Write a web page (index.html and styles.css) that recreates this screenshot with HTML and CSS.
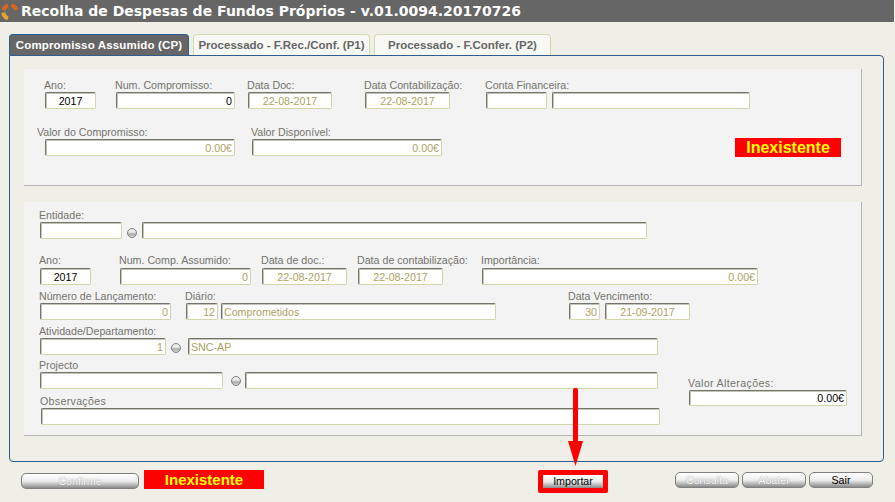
FILE: index.html
```html
<!DOCTYPE html>
<html>
<head>
    <title>Recolha de Despesas de Fundos Próprios</title>
    <link rel="stylesheet" href="styles.css">
</head>
<body>
    <div class="title-bar">
        <svg class="logo" width="17" height="18" viewBox="0 0 17 18" fill="none" stroke-width="4">
            <path d="M2.6 8 A6.5 6.5 0 0 1 7 3.4" stroke="#d9661f"/>
            <path d="M10.6 3.2 A6.5 6.5 0 0 1 15 8" stroke="#d9661f"/>
            <path d="M2.4 10.5 A6.5 6.5 0 0 0 7 16.3" stroke="#e8a22e"/>
        </svg>
        <h1>Recolha de Despesas de Fundos Próprios - v.01.0094.20170726</h1>
    </div>

    <div class="tabs">
        <div class="tab tab-active">Compromisso Assumido (CP)</div>
        <div class="tab">Processado - F.Rec./Conf. (P1)</div>
        <div class="tab">Processado - F.Confer. (P2)</div>
    </div>

    <div class="frame">
        <div class="panel panel-top">
            <div class="row row-a">
                <div class="field w-ano1"><label>Ano:</label><input class="active center" value="2017"></div>
                <div class="field w-num1"><label>Num. Compromisso:</label><input class="active right" value="0"></div>
                <div class="field w-data1"><label>Data Doc:</label><input class="center" value="22-08-2017"></div>
                <div class="field w-cont1"><label>Data Contabilização:</label><input class="center" value="22-08-2017"></div>
                <div class="field w-conta"><label>Conta Financeira:</label><input></div>
                <div class="field w-conta2"><label>&nbsp;</label><input></div>
            </div>
            <div class="row row-b">
                <div class="field w-valor"><label>Valor do Compromisso:</label><input class="right" value="0.00€"></div>
                <div class="field w-disp"><label>Valor Disponível:</label><input class="right" value="0.00€"></div>
                <div class="status status-top">Inexistente</div>
            </div>
        </div>

        <div class="panel panel-bottom">
            <div class="row row-ent">
                <div class="field w-ent"><label>Entidade:</label><input></div>
                <span class="radio radio-ent"></span>
                <div class="field w-ent2"><label>&nbsp;</label><input></div>
            </div>
            <div class="row row-ano">
                <div class="field w-ano2"><label>Ano:</label><input class="active center" value="2017"></div>
                <div class="field w-num2"><label>Num. Comp. Assumido:</label><input class="right" value="0"></div>
                <div class="field w-data2"><label>Data de doc.:</label><input class="center" value="22-08-2017"></div>
                <div class="field w-cont2"><label>Data de contabilização:</label><input class="center" value="22-08-2017"></div>
                <div class="field w-imp"><label>Importância:</label><input class="right" value="0.00€"></div>
            </div>
            <div class="row row-lanc">
                <div class="field w-lanc"><label>Número de Lançamento:</label><input class="right" value="0"></div>
                <div class="field w-diario"><label>Diário:</label><input class="right" value="12"></div>
                <div class="field w-diario2"><label>&nbsp;</label><input value="Comprometidos"></div>
                <div class="field w-dias"><label class="nowrap">Data Vencimento:</label><input class="right" value="30"></div>
                <div class="field w-venc"><label>&nbsp;</label><input class="center" value="21-09-2017"></div>
            </div>
            <div class="row row-ativ">
                <div class="field w-ativ"><label class="nowrap">Atividade/Departamento:</label><input class="right" value="1"></div>
                <span class="radio radio-ativ"></span>
                <div class="field w-ativ2"><label>&nbsp;</label><input value="SNC-AP"></div>
            </div>
            <div class="split">
                <div class="split-main">
                    <div class="row row-proj">
                        <div class="field w-proj"><label>Projecto</label><input></div>
                        <span class="radio radio-proj"></span>
                        <div class="field w-proj2"><label>&nbsp;</label><input></div>
                    </div>
                    <div class="row row-obs">
                        <div class="field w-obs"><label>Observações</label><input></div>
                    </div>
                </div>
                <div class="field w-alt"><label>Valor Alterações:</label><input class="active right" value="0.00€"></div>
            </div>
        </div>
    </div>

    <div class="actions">
        <button class="btn btn-confirm" disabled>Confirme</button>
        <div class="status status-bottom">Inexistente</div>
        <div class="highlight"><button class="btn btn-import">Importar</button></div>
        <div class="actions-right">
            <button class="btn" disabled>Consulta</button>
            <button class="btn" disabled>Abater</button>
            <button class="btn">Sair</button>
        </div>
    </div>

    <svg class="arrow" width="17" height="80" viewBox="0 0 17 80">
        <rect x="6" y="0" width="5" height="56" rx="2" fill="#ff0000"/>
        <polygon points="1,53 16,53 8.5,78" fill="#ff0000"/>
    </svg>
</body>
</html>
```

FILE: styles.css
```css
html, body {
    height: 100%;
}

body {
    margin: 0;
    overflow: hidden;
    background-color: #efefe7;
    font-family: "Liberation Sans", Arial, sans-serif;
    font-size: 8pt;
    color: #74746e;
}

.title-bar {
    display: flex;
    align-items: center;
    height: 22px;
    margin-right: 1px;
    background-color: #666666;
}

.logo {
    margin-left: 1px;
}

.title-bar h1 {
    margin: 0 0 0 3px;
    font-family: "DejaVu Sans", Verdana, sans-serif;
    font-size: 14px;
    font-weight: bold;
    color: #ffffff;
    white-space: nowrap;
}

.tabs {
    display: flex;
    gap: 4px;
    height: 21px;
    margin: 12px 0 0 9px;
}

.tab {
    width: 177px;
    border: 1px solid #d6d9b0;
    border-bottom: none;
    border-radius: 4px 4px 0 0;
    background-color: #f8f8f4;
    box-sizing: border-box;
    font-size: 11.5px;
    font-weight: bold;
    line-height: 21px;
    text-align: center;
    color: #666666;
    white-space: nowrap;
}

.tab-active {
    width: 180px;
    border-color: #2a5f8f;
    background-color: #666666;
    color: #ffffff;
    letter-spacing: 0.16px;
}

.frame {
    width: 875px;
    height: 407px;
    margin-left: 9px;
    padding: 13px 21px 0 14px;
    border: 1px solid #2a5f8f;
    border-radius: 0 4px 4px 4px;
    box-sizing: border-box;
}

.panel {
    border-right: 1px solid #b5b5b5;
    border-bottom: 1px solid #b5b5b5;
    background-color: #f3f3f3;
    box-sizing: border-box;
}

.panel-top {
    height: 117px;
    margin-bottom: 16px;
}

.panel-bottom {
    height: 234px;
}

.row {
    display: flex;
}

.field {
    display: flex;
    flex-direction: column;
}

.field label {
    height: 14px;
    line-height: 14px;
    white-space: nowrap;
}

.field input {
    height: 17px;
    margin-left: 1px;
    padding: 0 2px;
    border: 1px solid #d2d6aa;
    border-top-color: #74746c;
    border-left-color: #74746c;
    border-radius: 2px;
    box-sizing: border-box;
    box-shadow: inset 1px 1px 0 #c4c4b8;
    background-color: #ffffff;
    font-family: "Liberation Sans", Arial, sans-serif;
    font-size: 8pt;
    color: #aea264;
    outline: none;
}

.field input.center {
    text-align: center;
}

.field input.right {
    text-align: right;
}

.field input.active {
    color: #000000;
}

.radio {
    flex: none;
    width: 10px;
    height: 10px;
    border: 1px solid #808080;
    border-radius: 50%;
    box-sizing: border-box;
    background: linear-gradient(#f0f0f0 0%, #e8e8e8 40%, #a8a8a8 65%, #dcdcdc 100%);
}

/* top panel */
.row-a {
    padding: 9px 0 0 20px;
}

.w-ano1 { width: 52px; margin-right: 19px; }
.w-ano1 input { width: 51px; }
.w-num1 { width: 120px; margin-right: 12px; }
.w-num1 input { width: 119px; }
.w-data1 { width: 85px; margin-right: 32px; }
.w-data1 input { width: 84px; }
.w-cont1 { width: 86px; margin-right: 35px; }
.w-cont1 input { width: 85px; }
.w-conta { width: 62px; margin-right: 4px; }
.w-conta input { width: 61px; }
.w-conta2 { width: 199px; }
.w-conta2 input { width: 198px; }

.row-b {
    padding: 16px 0 0 13px;
}

.w-valor { margin-right: 16px; }
.w-valor input { width: 190px; margin-left: 8px; }
.w-disp input { width: 190px; }

.status {
    background-color: #ff0000;
    color: #ffff00;
    font-size: 16px;
    font-weight: bold;
    text-align: center;
}

.status-top {
    width: 106px;
    height: 19px;
    margin: 13px 0 0 293px;
    line-height: 20px;
}

/* bottom panel */
.panel-bottom .row {
    padding-left: 15px;
}

.row-ent {
    padding-top: 6px;
}

.w-ent input { width: 82px; }
.w-ent { margin-right: 5px; }
.radio-ent { margin: 20px 4px 0 0; }
.w-ent2 input { width: 505px; }

.row-ano {
    padding-top: 14px;
}

.row-ano label {
    height: 15px;
}

.w-ano2 { width: 52px; margin-right: 28px; }
.w-ano2 input { width: 51px; }
.w-num2 { width: 132px; margin-right: 10px; }
.w-num2 input { width: 131px; }
.w-data2 { width: 86px; margin-right: 10px; }
.w-data2 input { width: 85px; }
.w-cont2 { width: 86px; margin-right: 38px; }
.w-cont2 input { width: 85px; }
.w-imp input { width: 276px; }

.row-lanc {
    padding-top: 4px;
}

.w-lanc { width: 132px; margin-right: 14px; }
.w-lanc input { width: 131px; }
.w-diario { width: 33px; margin-right: 2px; }
.w-diario input { width: 32px; }
.w-diario2 { margin-right: 72px; }
.w-diario2 input { width: 275px; }
.w-dias { width: 32px; margin-right: 4px; }
.w-dias input { width: 31px; }
.w-venc input { width: 85px; }

.nowrap {
    width: 0;
}

.row-ativ {
    padding-top: 4px;
}

.w-ativ { width: 127px; margin-right: 5px; }
.w-ativ input { width: 126px; }
.radio-ativ { margin: 19px 6px 0 0; }
.w-ativ2 input { width: 470px; }

.split {
    display: flex;
}

.split-main {
    width: 664px;
}

.row-proj {
    padding-top: 3px;
}

.w-proj { margin-right: 8px; }
.w-proj input { width: 183px; }
.radio-proj { margin: 18px 3px 0 0; }
.w-proj2 input { width: 413px; }

.row-obs {
    padding-top: 5px;
}

.w-obs label {
    margin-left: 1px;
    letter-spacing: 0.3px;
}

.w-obs input { width: 619px; margin-left: 2px; }

.w-alt {
    padding-top: 21px;
}

.w-alt label {
    letter-spacing: 0.35px;
}

.w-alt input {
    width: 158px;
    height: 16px;
}

/* bottom buttons */
.actions {
    display: flex;
    align-items: flex-start;
    padding: 8px 0 0 21px;
}

.btn {
    width: 64px;
    height: 16px;
    padding: 0;
    border: 1px solid #808080;
    border-radius: 5px;
    box-sizing: border-box;
    background: linear-gradient(#ffffff 0%, #eeeeee 50%, #8a8a8a 100%);
    font-family: "Liberation Sans", Arial, sans-serif;
    font-size: 8pt;
    line-height: 13px;
    color: #000000;
}

.btn:disabled {
    color: #ffffff;
    text-shadow: 0 0 1px #777777;
}

.btn-confirm {
    width: 118px;
    height: 16px;
    margin: 3px 5px 0 0;
}

.status-bottom {
    width: 120px;
    height: 19px;
    font-size: 15px;
    line-height: 20px;
}

.highlight {
    margin-left: 274px;
    padding: 5px;
    border-radius: 2px;
    background-color: #ff0000;
}

.btn-import {
    display: block;
    width: 60px;
    height: 13px;
    border: none;
    border-radius: 0;
}

.actions-right {
    display: flex;
    gap: 3px;
    margin: 2px 0 0 67px;
}

/* arrow over the panel */
.arrow {
    position: absolute;
    left: 567px;
    top: 388px;
}
```
